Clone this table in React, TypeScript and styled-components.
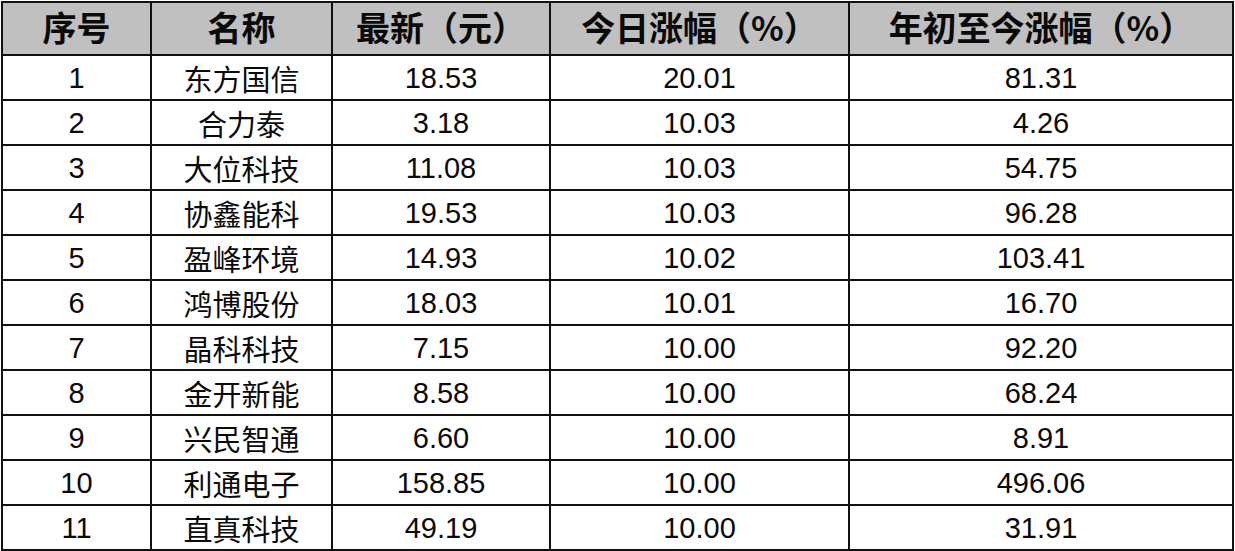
import React from 'react'
import styled, { createGlobalStyle } from 'styled-components'

const GlobalStyle = createGlobalStyle`
    html, body {
        margin: 0;
        padding: 0;
        background: #ffffff;
    }
`

const Sheet = styled.table`
    border-collapse: collapse;
    table-layout: fixed;
    width: 1231px;
    margin: 1px 0 0 1px;
    color: #0a0a0a;
    font-family: "Liberation Sans", "Noto Sans CJK SC", sans-serif;

    th, td {
        border: 2px solid #111111;
        text-align: center;
        padding: 0;
        overflow: hidden;
        white-space: nowrap;
    }
`

const HeadCell = styled.th`
    height: 48px;
    background-color: #c0c0c0;
    font-family: "Noto Sans CJK SC", sans-serif;
    font-weight: 700;
    font-size: 34px;
    line-height: 1;
    padding-bottom: 3px !important;
`

const Cell = styled.td<{ $cjk?: boolean }>`
    height: 41px;
    font-size: 29px;
    font-family: ${p => (p.$cjk ? '"Noto Sans CJK SC", sans-serif' : '"Liberation Sans", sans-serif')};
    line-height: 1;
    padding-top: 2px !important;
`

const columns = [
    { title: '序号', width: 149 },
    { title: '名称', width: 181 },
    { title: '最新（元）', width: 218 },
    { title: '今日涨幅（%）', width: 299 },
    { title: '年初至今涨幅（%）', width: 384 },
]

const rows = [
    ['1', '东方国信', '18.53', '20.01', '81.31'],
    ['2', '合力泰', '3.18', '10.03', '4.26'],
    ['3', '大位科技', '11.08', '10.03', '54.75'],
    ['4', '协鑫能科', '19.53', '10.03', '96.28'],
    ['5', '盈峰环境', '14.93', '10.02', '103.41'],
    ['6', '鸿博股份', '18.03', '10.01', '16.70'],
    ['7', '晶科科技', '7.15', '10.00', '92.20'],
    ['8', '金开新能', '8.58', '10.00', '68.24'],
    ['9', '兴民智通', '6.60', '10.00', '8.91'],
    ['10', '利通电子', '158.85', '10.00', '496.06'],
    ['11', '直真科技', '49.19', '10.00', '31.91'],
]

const App = () => {
    return (
        <>
            <GlobalStyle />
            <Sheet>
                <colgroup>
                    {columns.map(c => (
                        <col key={c.title} style={{ width: c.width }} />
                    ))}
                </colgroup>
                <thead>
                    <tr>
                        {columns.map(c => (
                            <HeadCell key={c.title}>{c.title}</HeadCell>
                        ))}
                    </tr>
                </thead>
                <tbody>
                    {rows.map(r => (
                        <tr key={r[0]}>
                            {r.map((v, i) => (
                                <Cell key={i} $cjk={i === 1}>{v}</Cell>
                            ))}
                        </tr>
                    ))}
                </tbody>
            </Sheet>
        </>
    )
}

export default App
